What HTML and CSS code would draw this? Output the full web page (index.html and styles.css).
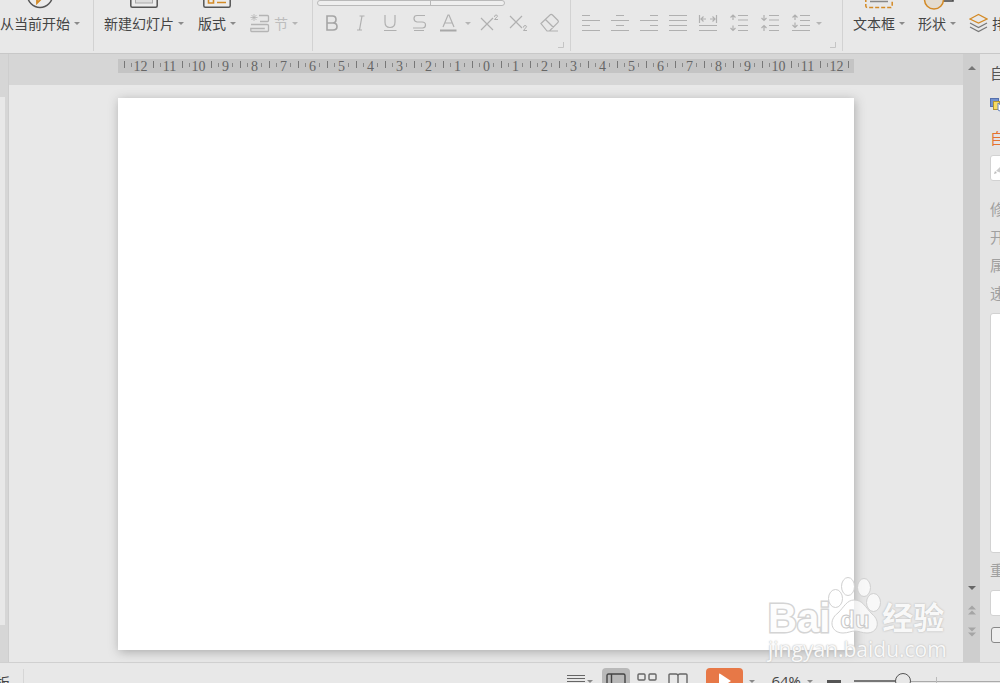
FILE: index.html
```html
<!DOCTYPE html>
<html lang="zh-CN">
<head>
<meta charset="utf-8">
<title>演示文稿</title>
<link rel="stylesheet" href="styles.css">
</head>
<body>
<div class="app">
  <header class="ribbon">
    <section class="group group-play">
      <button class="tool"><svg class="tool-icon" width="28" height="28" viewBox="0 0 28 28"><circle cx="14" cy="14" r="12.5" fill="#ececec" stroke="#555" stroke-width="1.5"/><path d="M11 8v14l3.500-3.500 4-2z" fill="none" stroke="#d38a26" stroke-width="1.8"/></svg><span class="label">从当前开始<i class="caret"></i></span></button>
    </section>
    <section class="group group-slides">
      <button class="tool"><svg class="tool-icon" width="28" height="28" viewBox="0 0 28 28"><rect x=".8" y="4" width="26.4" height="22.2" rx="1.5" fill="#ececec" stroke="#555" stroke-width="1.5"/><rect x="5.5" y="9" width="17" height="13" fill="#ddd" stroke="#aaa"/></svg><span class="label">新建幻灯片<i class="caret"></i></span></button>
      <button class="tool"><svg class="tool-icon" width="28" height="28" viewBox="0 0 28 28"><rect x=".8" y="4" width="26.4" height="22.2" rx="1.5" fill="#ececec" stroke="#555" stroke-width="1.5"/><path d="M5.5 10h5v12h-5zM14 17h9M14 21.5h9" fill="none" stroke="#d38a26" stroke-width="1.6"/></svg><span class="label">版式<i class="caret"></i></span></button>
      <button class="tool-inline muted" disabled><svg width="20" height="20" viewBox="0 0 20 20" fill="none" stroke="#b4b4b4" stroke-width="1.300"><path d="M4 1v7M.5 4.500h7M1.500 2l5 5M6.500 2l-5 5" stroke-width=".8"/><path d="M9 2.500h8.500q1 0 1 1v4q0 1-1 1H10M1 11.500h16q1.500 0 1.500 1v5q0 1-1 1H1.500q-.7 0-.7-1v-2h14"/></svg><span class="label">节<i class="caret"></i></span></button>
    </section>
    <section class="group group-font">
      <div class="fields"><input class="font-name" aria-label="字体"><input class="font-size" aria-label="字号"></div>
      <div class="row">
        <button class="icon" aria-label="加粗"><svg viewBox="0 0 20 20"><path d="M5 3h5.500q3.500 0 3.500 3.500T10.500 10H5zM5 10h6q4 0 4 3.500T11 17H5z" stroke-width="1.600" stroke="#a5a5a5"/></svg></button>
        <button class="icon" aria-label="倾斜"><svg viewBox="0 0 20 20"><path d="M8.500 3h5M6 17h5M11 3L8.500 17"/></svg></button>
        <button class="icon" aria-label="下划线"><svg viewBox="0 0 20 20"><path d="M5 2v7q0 5.500 5 5.500T15 9V2M4 17.500h12.500"/></svg></button>
        <button class="icon" aria-label="删除线"><svg viewBox="0 0 20 20"><path d="M16 2.500H8Q5 2.500 5 5.500t3 3.500h5q3.500 0 3.500 3t-3 3H4M5 17.500h10"/></svg></button>
        <button class="icon" aria-label="字体颜色"><svg viewBox="0 0 20 20"><path d="M5 14L10 2h1l5 12M7 10h7"/><path d="M2 17.500h16.500" stroke-width="2" stroke="#a8a8a8"/></svg></button>
        <button class="drop" aria-label="字体颜色选项"><i class="caret"></i></button>
        <button class="icon" aria-label="上标"><svg viewBox="0 0 20 20"><path d="M2 5l12 12M14 5L2 17"/><path d="M15.500 4q0-2 1.500-2t1.500 1.300L15.500 6.500h3.500" stroke-width="1"/></svg></button>
        <button class="icon" aria-label="下标"><svg viewBox="0 0 20 20"><path d="M2 3l12 12M14 3L2 15"/><path d="M15.500 14.500q0-2 1.500-2t1.500 1.300L15.500 17.500h3.500" stroke-width="1"/></svg></button>
        <button class="icon last" aria-label="清除格式"><svg viewBox="0 0 20 20"><path d="M1 10.500L10.500 1.500Q11.500 1 12.500 2L18 7.500Q18.800 8.500 18 9.300L9.500 18H7zM5.500 6.500l8 8M7 18h11"/></svg></button>
      </div>
      <svg class="launcher" width="6" height="6" viewBox="0 0 6 6"><path d="M5.500 0v5.500H0" fill="none" stroke="#c4c4c4"/></svg>
    </section>
    <section class="group group-paragraph">
      <div class="row">
        <button class="icon" aria-label="左对齐"><svg viewBox="0 0 20 20"><path d="M1 2.500h8M1 7.500h18M1 12.500h8M1 17.500h18"/></svg></button>
        <button class="icon" aria-label="居中"><svg viewBox="0 0 20 20"><path d="M6 2.500h8M1 7.500h18M6 12.500h8M1 17.500h18"/></svg></button>
        <button class="icon" aria-label="右对齐"><svg viewBox="0 0 20 20"><path d="M11 2.500h8M1 7.500h18M11 12.500h8M1 17.500h18"/></svg></button>
        <button class="icon" aria-label="两端对齐"><svg viewBox="0 0 20 20"><path d="M1 2.500h18M1 7.500h18M1 12.500h18M1 17.500h18"/></svg></button>
        <button class="icon roomy" aria-label="分散对齐"><svg viewBox="0 0 20 20"><path d="M1.500 2v8M18.500 2v8M8 6H3M5.500 3.500L3 6l2.500 2.500M12 6h5M14.500 3.500L17 6l-2.500 2.500M1 12.500h18M1 17.500h18"/></svg></button>
        <button class="icon roomy" aria-label="增大段落间距"><svg viewBox="0 0 20 20"><path d="M9 2.500h10M9 7h10M9 12.500h10M9 17.500h10M4 7V2.500M1.500 4.500L4 2l2.500 2.500M4 12.500v5M1.500 15L4 17.500 6.500 15"/></svg></button>
        <button class="icon roomy" aria-label="减小段落间距"><svg viewBox="0 0 20 20"><path d="M9 2.500h10M9 7h10M9 12.500h10M9 17.500h10M4 2v5.500M1.500 5L4 7.500 6.500 5M4 18v-5.500M1.500 15L4 12.500 6.500 15"/></svg></button>
        <button class="icon roomy" aria-label="行距"><svg viewBox="0 0 20 20"><path d="M9 2.500h10M9 7.500h10M9 12.500h10M1 17.500h18M4 7V2M1.500 4.500L4 2l2.500 2.500M4 9.500v5M1.500 12L4 14.500 6.500 12"/></svg></button>
        <button class="drop line-drop" aria-label="行距选项"><i class="caret"></i></button>
      </div>
      <svg class="launcher" width="6" height="6" viewBox="0 0 6 6"><path d="M5.500 0v5.500H0" fill="none" stroke="#c4c4c4"/></svg>
    </section>
    <section class="group group-insert">
      <button class="tool"><svg class="tool-icon" width="28" height="28" viewBox="0 0 28 28"><path d="M5 20.500h18" stroke="#888" stroke-width="1.500"/><path d="M.8 17v8q0 1.500 1.500 1.500h23.400q1.500 0 1.500-1.500v-8" fill="none" stroke="#d38a26" stroke-width="1.500" stroke-dasharray="4 2"/></svg><span class="label">文本框<i class="caret"></i></span></button>
      <button class="tool"><svg class="tool-icon" width="28" height="28" viewBox="0 0 28 28"><rect x="12" y="2" width="18" height="18" fill="#ececec" stroke="#444" stroke-width="1.500"/><circle cx="11" cy="18.500" r="9.500" fill="#e4dccf" stroke="#d38a26" stroke-width="1.500"/></svg><span class="label">形状<i class="caret"></i></span></button>
      <button class="tool-inline arrange"><svg width="19" height="20" viewBox="0 0 19 20" fill="none" stroke="#777" stroke-width="1.200"><path d="M1 6l8.500-4.500L18 6l-8.500 4z" stroke="#d38a26"/><path d="M1 10l8.500 4.500L18 10M1 14l8.500 4.500L18 14"/></svg><span class="label">排</span></button>
    </section>
  </header>

  <main class="workspace">
    <aside class="thumbs"><div class="thumb-track"></div></aside>
    <section class="editor">
      <div class="ruler-band"><div class="ruler">
        <span class="unit two">12</span><span class="unit two">11</span><span class="unit two">10</span><span class="unit">9</span><span class="unit">8</span><span class="unit">7</span><span class="unit">6</span><span class="unit">5</span><span class="unit">4</span><span class="unit">3</span><span class="unit">2</span><span class="unit">1</span><span class="unit">0</span><span class="unit">1</span><span class="unit">2</span><span class="unit">3</span><span class="unit">4</span><span class="unit">5</span><span class="unit">6</span><span class="unit">7</span><span class="unit">8</span><span class="unit">9</span><span class="unit two">10</span><span class="unit two">11</span><span class="unit two end">12</span>
      </div></div>
      <div class="stage"><div class="slide"></div></div>
    </section>
    <div class="scrollbar">
      <button aria-label="向上滚动"><svg width="8" height="6" viewBox="0 0 8 6"><path d="M0 5l4-4 4 4z" fill="#777"/></svg></button>
      <span class="track"></span>
      <button aria-label="向下滚动"><svg width="8" height="6" viewBox="0 0 8 6"><path d="M0 1l4 4 4-4z" fill="#666"/></svg></button>
      <button aria-label="上一张"><svg width="8" height="10" viewBox="0 0 8 10"><path d="M0 4.500l4-4 4 4zM0 9.500l4-4 4 4z" fill="#a5a5a5"/></svg></button>
      <button aria-label="下一张"><svg width="8" height="10" viewBox="0 0 8 10"><path d="M0 .5l4 4 4-4zM0 5.500l4 4 4-4z" fill="#a5a5a5"/></svg></button>
    </div>
    <aside class="pane">
      <h2 class="pane-title">自</h2>
      <div class="pane-tool"><svg width="14" height="14" viewBox="0 0 14 14"><rect x=".5" y=".5" width="8" height="8" fill="#7391cf" stroke="#5470ad"/><rect x="3.500" y="3.500" width="6" height="8" fill="#f7dc62" stroke="#b39632"/><path d="M8 5l5 4-3 4-2-1z" fill="#fff" stroke="#6683bd"/></svg></div>
      <h3 class="pane-section">自</h3>
      <button class="effect" aria-label="添加效果"><svg width="14" height="14" viewBox="0 0 14 14"><path d="M3 10l7-7 4 4-6 5z" fill="#ccc"/><path d="M1 13l1-3 2 2z" fill="#bbb"/></svg></button>
      <div class="props"><span>修</span><span>开</span><span>属</span><span>速</span></div>
      <div class="effects"></div>
      <span class="reorder">重</span>
      <button class="play-preview" aria-label="播放"></button>
      <input class="auto" type="checkbox" aria-label="自动预览">
    </aside>
  </main>

  <footer class="status"><div class="status-row">
    <div class="template">板</div>
    <div class="views">
      <button class="notes" aria-label="备注"><svg width="18" height="14" viewBox="0 0 18 14"><path d="M0 1.500h18M0 4.500h18M0 7.500h18M0 10.500h18" stroke="#666" stroke-width="1.200"/></svg><i class="caret"></i></button>
      <button class="view active" aria-label="普通视图"><svg width="20" height="16" viewBox="0 0 20 16"><path d="M1 15V2.500Q1 1 2.500 1h15Q19 1 19 2.500V15zM5.500 1v14" fill="none" stroke="#444" stroke-width="1.400"/></svg></button>
      <button class="view" aria-label="幻灯片浏览"><svg width="20" height="16" viewBox="0 0 20 16" fill="none" stroke="#666" stroke-width="1.400"><rect x="1" y="1" width="7" height="6" rx="1"/><rect x="12" y="1" width="7" height="6" rx="1"/><rect x="1" y="11" width="7" height="6" rx="1"/><rect x="12" y="11" width="7" height="6" rx="1"/></svg></button>
      <button class="view" aria-label="阅读视图"><svg width="20" height="16" viewBox="0 0 20 16"><path d="M1 15V2q0-1 1-1h6q2 0 2 2 0-2 2-2h6q1 0 1 1v13M10 3v12" fill="none" stroke="#666" stroke-width="1.400"/></svg></button>
    </div>
    <button class="play" aria-label="放映"><svg width="14" height="16" viewBox="0 0 14 16"><path d="M1 1.500Q1 0 2.500 1L13 8 2.500 15Q1 16 1 14.500z" fill="#fff"/></svg></button>
    <i class="caret"></i>
    <button class="zoom">64%<i class="caret"></i></button>
    <button class="minus" aria-label="缩小"></button>
    <input class="slider" type="range" min="0" max="100" value="28" aria-label="缩放">
  </div></footer>

  <div class="watermark">
    <div class="brand"><span class="bai">Bai</span><svg class="paw" width="52" height="60" viewBox="0 0 52 60" fill="#fff" fill-opacity=".7" stroke="#d0d0d0"><ellipse cx="8.500" cy="21.500" rx="7" ry="9"/><ellipse cx="21" cy="9.500" rx="6.500" ry="9"/><ellipse cx="37" cy="10.500" rx="6.500" ry="9"/><ellipse cx="46.500" cy="25.500" rx="7" ry="9"/><path d="M27 23C20 23 17 30 11 36 1 43 4 56 16 56 21 56 24 54 28 54S35 56 40 56C51 56 54 44 45 37 38 30 36 23 27 23z"/><text x="28" y="51" class="du">du</text></svg><span class="jy">经验</span></div>
    <div class="url">jingyan.baidu.com</div>
  </div>
</div>
</body>
</html>
```
FILE: styles.css
```css
* { box-sizing: border-box; }
body {
  margin: 0;
  overflow: hidden;
  background: #e8e8e8;
  color: #444;
  font-family: "Noto Sans CJK SC", sans-serif;
  font-size: 14px;
}
button, input { font: inherit; color: inherit; }
button { padding: 0; border: 0; background: none; }
h2, h3 { margin: 0; font-weight: 400; }
svg { display: block; flex: none; }

.app {
  position: relative;
  display: flex;
  flex-direction: column;
  height: 100vh;
  overflow: hidden;
}

/* Ribbon */
.ribbon {
  display: flex;
  flex: none;
  height: 54px;
  overflow: hidden;
  border-bottom: 1px solid #c8c8c8;
}
.group {
  position: relative;
  display: flex;
  flex: none;
  align-items: flex-end;
  height: 51px;
  padding-bottom: 17px;
  border-right: 1px solid #d2d2d2;
}
.group-play { width: 94px; }
.group-slides { width: 219px; padding-left: 10px; gap: 14px; }
.group-font, .group-paragraph {
  flex-direction: column;
  justify-content: flex-end;
  align-items: flex-start;
  padding-left: 5px;
}
.group-font { width: 258px; padding-left: 4px; }
.group-paragraph { width: 272px; }
.group-insert { flex: 1; padding-left: 10px; gap: 13px; border-right: 0; }
.tool {
  display: flex;
  flex: none;
  flex-direction: column;
  align-items: center;
  gap: 3px;
}
.tool-icon { overflow: visible; }
.tool-inline {
  display: flex;
  flex: none;
  align-items: center;
  gap: 4px;
}
.label {
  display: flex;
  align-items: center;
  gap: 4px;
  height: 22px;
  line-height: 22px;
  white-space: nowrap;
}
.caret {
  display: block;
  flex: none;
  width: 0;
  height: 0;
  border: 3px solid transparent;
  border-top-color: #8a8a8a;
  border-bottom: 0;
}
.muted { color: #bdbdbd; }
.muted .caret, .drop .caret { border-top-color: #b5b5b5; }
.fields {
  display: flex;
  width: 188px;
  height: 24px;
  margin-bottom: 6px;
  overflow: hidden;
  border: 1px solid #b9b9b9;
  border-radius: 4px;
  background: #efefef;
}
.fields input { min-width: 0; border: 0; background: none; }
.fields .font-name { flex: 114; border-right: 1px solid #b9b9b9; }
.fields .font-size { flex: 73; }
.row { display: flex; align-items: center; height: 22px; }
.icon {
  display: flex;
  flex: none;
  justify-content: center;
  width: 29px;
}
.icon svg { width: 20px; height: 20px; fill: none; stroke: #b0b0b0; stroke-width: 1.2; }
.icon.roomy { width: 31px; }
.icon.last { margin-left: 3px; }
.drop {
  display: flex;
  align-items: center;
  justify-content: center;
  width: 12px;
  height: 22px;
}
.line-drop { width: 6px; }
.launcher { position: absolute; right: 6px; bottom: 3px; }

/* Workspace */
.workspace {
  display: grid;
  flex: 1;
  grid-template-columns: 9px 1fr 17px 20px;
  min-height: 0;
}
.thumbs {
  padding: 43px 3px 37px 0;
  border-right: 1px solid #cecece;
  background: #d6d6d6;
}
.thumb-track { height: 100%; background: #e8e8e8; }
.editor { display: flex; flex-direction: column; min-width: 0; }
.ruler-band {
  height: 31px;
  padding: 5px 109px 12px;
  background: #d6d6d6;
}
.ruler {
  display: grid;
  grid-template-columns: repeat(25, 1fr);
  height: 14px;
  padding: 0 5px 0 6px;
  background: #c4c4c4;
  color: #666;
  font: 14px/15px "Liberation Serif", serif;
}
.unit {
  min-width: 0;
  background:
    linear-gradient(#777, #777) 0 2px / 1px 7px no-repeat,
    linear-gradient(#888, #888) 25% 4px / 1px 4px no-repeat,
    linear-gradient(#888, #888) 75% 4px / 1px 4px no-repeat;
  text-align: center;
}
.two {
  padding-left: 4px;
  background:
    linear-gradient(#777, #777) 0 2px / 1px 7px no-repeat,
    linear-gradient(#888, #888) 25% 4px / 1px 4px no-repeat;
}
.end {
  background:
    linear-gradient(#777, #777) 0 2px / 1px 7px no-repeat,
    linear-gradient(#777, #777) 100% 2px / 1px 7px no-repeat,
    linear-gradient(#888, #888) 25% 4px / 1px 4px no-repeat;
}
.stage { display: flex; flex: 1; padding: 13px 109px 12px; }
.slide { flex: 1; background: #fff; box-shadow: 1px 2px 10px #aaa; }
.scrollbar {
  display: flex;
  flex-direction: column;
  align-items: center;
  padding: 3px 0 19px;
  background: #cecece;
}
.scrollbar button { display: grid; place-items: center; width: 17px; height: 22px; }
.track { flex: 1; }

/* Animation pane */
.pane {
  display: flex;
  flex-direction: column;
  padding: 4px 0 19px 10px;
  overflow: hidden;
  background: #e4e4e4;
  color: #a0a0a0;
  font-size: 15px;
  white-space: nowrap;
}
.pane-title { height: 30px; color: #555; font-size: 15px; line-height: 30px; }
.pane-tool { display: flex; align-items: center; height: 34px; }
.pane-section { height: 33px; color: #e57330; font-size: 15px; line-height: 32px; }
.effect, .play-preview, .effects {
  flex: none;
  width: 40px;
  border: 1px solid #d2d2d2;
  border-radius: 3px;
  background: #fff;
}
.effect { display: flex; align-items: center; height: 26px; padding-left: 2px; }
.props { display: flex; flex-direction: column; padding: 14px 0 6px; line-height: 28px; }
.effects { flex: 1; }
.reorder { padding: 3px 0 6px; line-height: 28px; }
.play-preview { height: 26px; }
.auto {
  flex: none;
  width: 16px;
  height: 16px;
  margin: 11px 0 0 1px;
  border: 1px solid #888;
  border-radius: 3px;
  background: #efefef;
  appearance: none;
}

/* Status bar */
.status {
  flex: none;
  height: 21px;
  overflow: hidden;
  border-top: 1px solid #d0d0d0;
}
.status-row { display: flex; align-items: center; height: 36px; }
.template {
  display: flex;
  justify-content: flex-end;
  width: 24px;
  height: 24px;
  padding-right: 13px;
  border-right: 1px solid #d6d6d6;
  line-height: 26px;
}
.views { display: flex; align-items: center; gap: 3px; margin-left: auto; }
.notes { display: flex; align-items: center; gap: 2px; margin-right: 6px; }
.view { display: grid; place-items: center; width: 28px; height: 26px; border-radius: 4px; }
.active { background: #b9b9b9; }
.play {
  display: grid;
  place-items: center;
  width: 37px;
  height: 26px;
  margin: 0 6px 0 14px;
  border-radius: 4px;
  background: #e77847;
}
.zoom {
  display: flex;
  align-items: center;
  gap: 6px;
  margin-left: 16px;
  font: 15px/24px "Open Sans", sans-serif;
}
.minus { width: 14px; height: 3px; margin: 0 13px 0 14px; background: #555; }
.slider {
  flex: none;
  width: 164px;
  height: 16px;
  margin: 0 -18px 0 0;
  background:
    linear-gradient(#bbb, #bbb) 50% 50% / 1px 8px no-repeat,
    linear-gradient(#777, #777) 0 50% / 49px 2px no-repeat,
    linear-gradient(#aaa, #aaa) 0 50% / 100% 1px no-repeat;
  appearance: none;
}
.slider::-webkit-slider-thumb {
  width: 16px;
  height: 16px;
  border: 1px solid #555;
  border-radius: 50%;
  background: #e8e8e8;
  appearance: none;
}

/* Watermark lies over the slide corner */
.watermark {
  position: absolute;
  right: 52px;
  bottom: 22px;
  width: 180px;
  color: #f8f8f8;
  pointer-events: none;
}
.brand { display: flex; align-items: flex-end; height: 62px; }
.bai {
  color: #fdfdfd;
  font: 700 40px/38px "Liberation Sans", sans-serif;
  -webkit-text-stroke: 3px #d4d4d4;
  paint-order: stroke fill;
}
.paw { margin-left: -3px; overflow: visible; }
.du {
  fill: #fff;
  stroke: #c8c8c8;
  font: 700 24px "Liberation Sans", sans-serif;
  text-anchor: middle;
}
.jy {
  margin-left: 3px;
  font-size: 31px;
  font-weight: 700;
  line-height: 43px;
  text-shadow: 0 0 2px #aaa;
}
.url {
  font: 21px/24px "Open Sans", "Noto Sans", sans-serif;
  text-shadow: 0 0 2px #bbb, 0 0 1px #ccc;
}
```
